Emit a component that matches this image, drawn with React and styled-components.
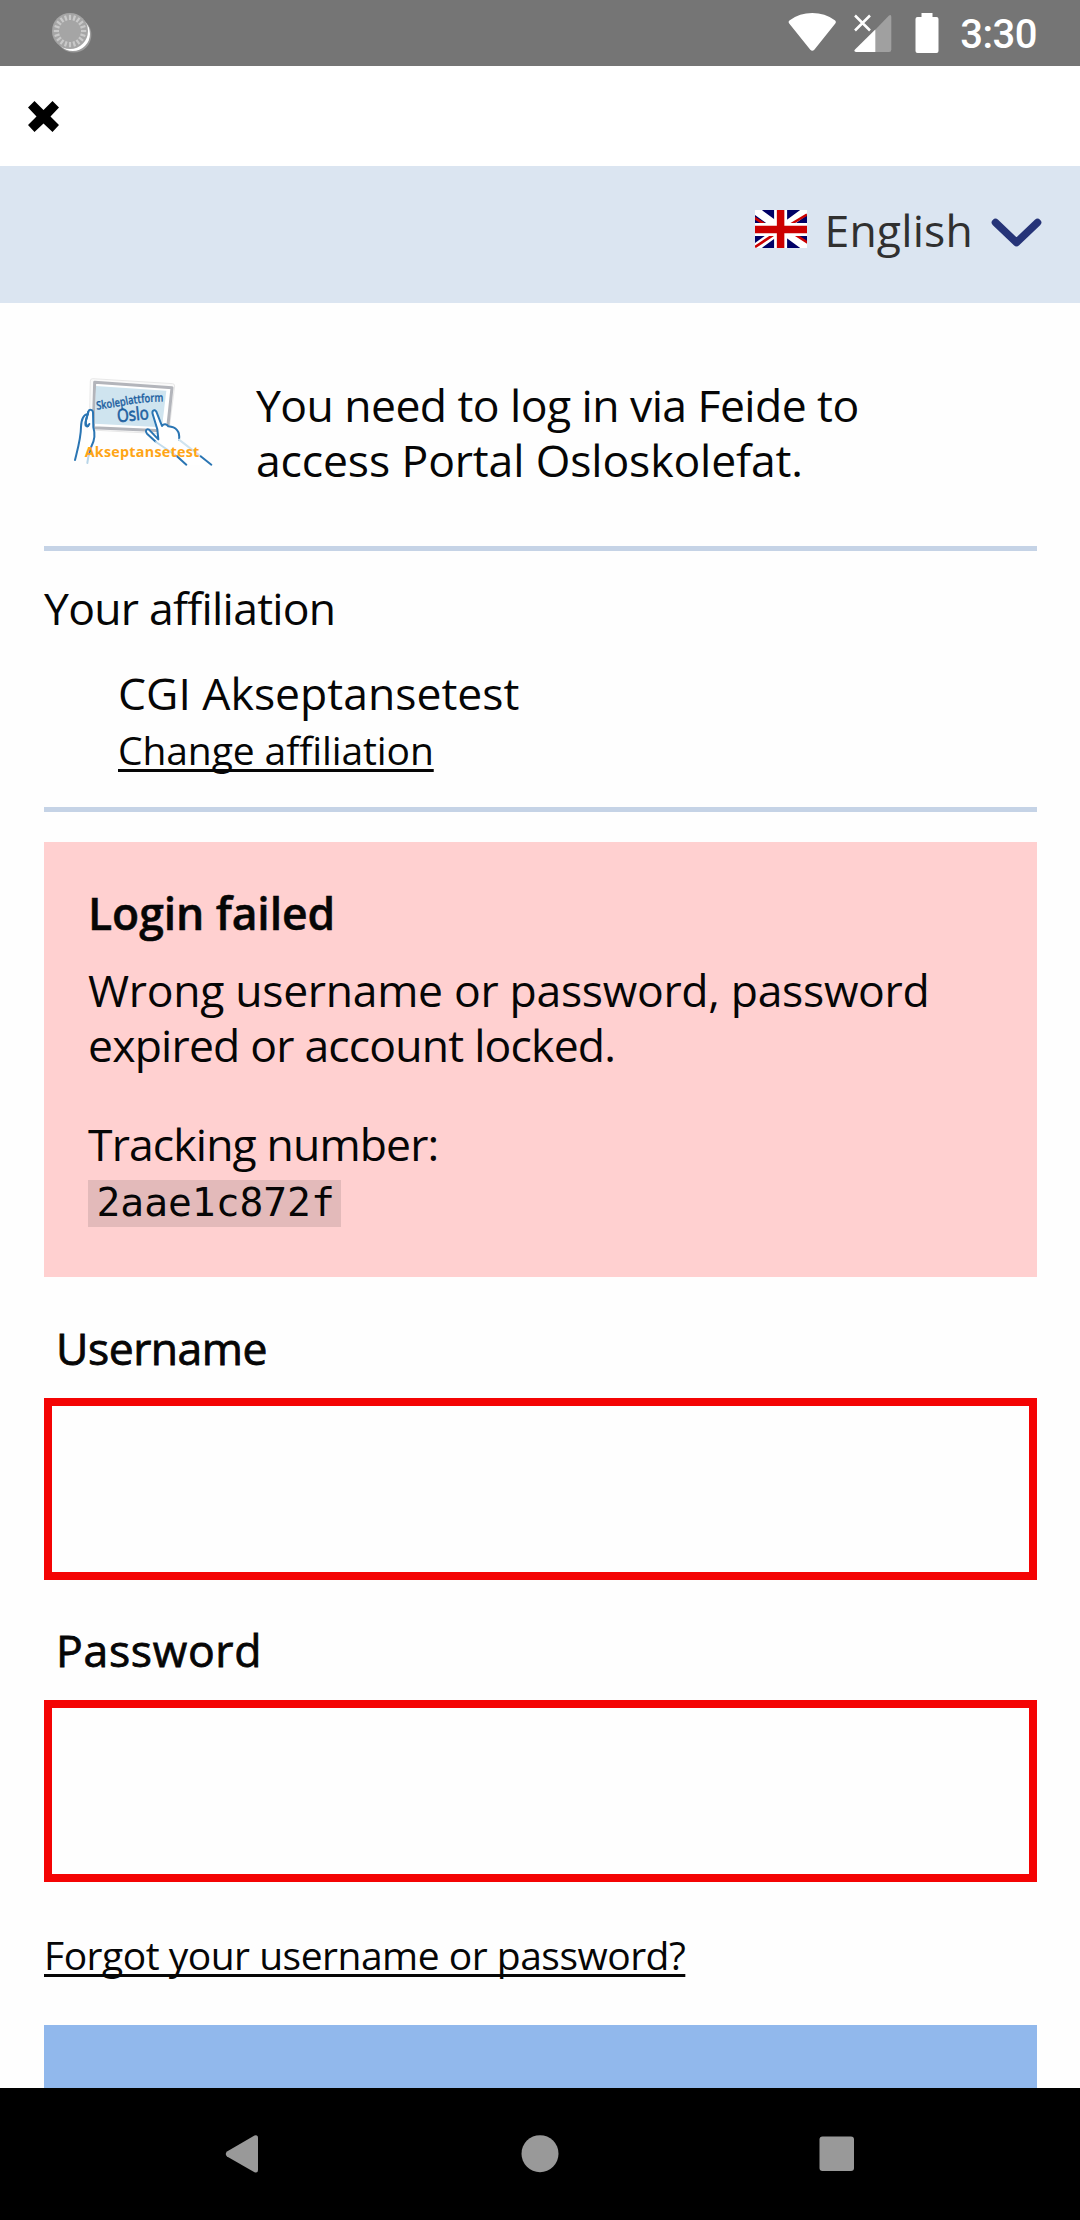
import React from "react";
import styled, { createGlobalStyle } from "styled-components";

const GlobalStyle = createGlobalStyle`
  * { box-sizing: border-box; }
  html, body { margin: 0; padding: 0; background: #fefefe; }
`;

const Screen = styled.div`
  display: flex;
  flex-direction: column;
  width: 1080px;
  height: 2220px;
  overflow: hidden;
  background: #fefefe;
  color: #060606;
  font-family: "Open Sans", "Noto Sans", sans-serif;
`;

const StatusBar = styled.header`
  display: flex;
  flex: none;
  justify-content: space-between;
  height: 66px;
  padding-left: 50px;
  padding-right: 43px;
  background: #757575;
`;

const StatusIcons = styled.div`
  display: flex;
`;

const Clock = styled.time`
  margin-left: 21px;
  color: #fff;
  font: 500 40px/66px Roboto, sans-serif;
  padding-top: 2px;
  height: 66px;
  letter-spacing: -0.5px;
`;

const Icon = styled.svg`
  display: block;
  flex: none;
`;

const StatusIcon = styled(Icon)`
  margin-left: ${(p) => p.$gap || 0}px;
`;

const AppBar = styled.div`
  display: flex;
  flex: none;
  height: 100px;
  padding: 34px 27px;
  background: #fff;
`;

const IconButton = styled.button`
  display: block;
  padding: 0;
  border: 0;
  background: none;
  line-height: 0;
`;

const LanguageBar = styled.div`
  display: flex;
  flex: none;
  justify-content: flex-end;
  height: 137px;
  padding: 36px 38px 0 0;
  background: #dbe5f1;
`;

const LanguageButton = styled.button`
  display: flex;
  align-items: flex-start;
  padding: 0;
  border: 0;
  background: none;
  color: #303030;
  font-family: inherit;
`;

const Flag = styled(Icon)`
  margin: 8px 17px 0 0;
`;

const Chevron = styled(Icon)`
  margin: 15px 0 0 17px;
`;

const Page = styled.main`
  display: flex;
  flex-direction: column;
  flex: 1;
  min-height: 0;
  overflow: hidden;
  padding: 0 43px 0 44px;
`;

const Line = styled.span`
  display: block;
  font-size: 44.5px;
  line-height: 55px;
  letter-spacing: ${(p) => p.$spacing || 0}px;
  white-space: nowrap;
`;

const Intro = styled.section`
  display: flex;
  flex: none;
  height: 243px;
  padding-top: 47px;
  margin-left: -4px;
`;

const IntroText = styled.p`
  margin: 0;
  padding: 27px 0 0 16px;
`;

const Divider = styled.hr`
  flex: none;
  width: 100%;
  height: 5px;
  margin: 0;
  border: 0;
  background: #c5d3e6;
`;

const Affiliation = styled.section`
  flex: none;
  height: 256px;
  padding-top: 29px;
`;

const Organisation = styled.div`
  padding: 30px 0 0 74px;
`;

const Link = styled.a`
  display: block;
  width: fit-content;
  margin-top: ${(p) => p.$top || 0}px;
  font-size: 39px;
  line-height: 48px;
  letter-spacing: ${(p) => p.$spacing}px;
  color: #060606;
  text-decoration: underline;
  text-decoration-thickness: 2.6px;
  text-underline-offset: 4px;
  text-decoration-skip-ink: none;
  white-space: nowrap;
`;

const Alert = styled.section`
  flex: none;
  height: 435px;
  margin-top: 30px;
  padding: 43px 44px 0;
  background: #ffd0d0;
`;

const AlertTitle = styled.h2`
  margin: 0 0 22px;
  font-size: 44.5px;
  font-weight: 600;
  line-height: 55px;
  letter-spacing: -0.1px;
  -webkit-text-stroke: 0.5px currentColor;
`;

const AlertText = styled.p`
  margin: 0 0 44px;
`;

const TrackingCode = styled.code`
  display: block;
  width: 253px;
  height: 47px;
  margin-top: 9px;
  padding-left: 8.5px;
  background: #e3baba;
  font: 39.6px/45px "DejaVu Sans Mono", monospace;
`;

const Field = styled.label`
  display: block;
  flex: none;
  margin-top: ${(p) => p.$top}px;
`;

const FieldLabel = styled.span`
  display: block;
  padding-left: 12px;
  margin-bottom: 23px;
  font-size: 44.5px;
  line-height: 55px;
  letter-spacing: ${(p) => p.$spacing}px;
  -webkit-text-stroke: 0.8px currentColor;
`;

const Input = styled.input`
  display: block;
  width: 100%;
  height: 182px;
  border: 8px solid #f40404;
  border-radius: 0;
  background: #fefefe;
  outline: none;
`;

const SubmitButton = styled.button`
  flex: none;
  height: 140px;
  margin-top: 46px;
  border: 0;
  background: #91b8ec;
`;

const NavigationBar = styled.nav`
  display: flex;
  flex: none;
  justify-content: space-between;
  height: 132px;
  padding: 46px 225px 0;
  background: #000;
`;

const ticks = Array.from({ length: 20 }, (_, i) => i * 18);

function Spinner() {
  return (
    <Icon width="44" height="66" viewBox="0 0 44 66">
      <circle cx="23.8" cy="35" r="17.6" fill="#9b9b9b" />
      <circle cx="22.8" cy="33.8" r="17.2" fill="#fff" />
      <circle cx="20" cy="31" r="18" fill="#a5a5a5" />
      {ticks.map((a) => (
        <line key={a} x1="20" y1="14.8" x2="20" y2="20" stroke="#c9c9c9" strokeWidth="2.2" transform={`rotate(${a} 20 31)`} />
      ))}
    </Icon>
  );
}

function Wifi() {
  return (
    <StatusIcon width="48" height="66" viewBox="0 0 48 66">
      <path d="M1.2 23.5Q-.2 21.6 1.8 20.2Q11.5 13 24.3 13Q37 13 46.8 20.2Q48.6 21.6 47.3 23.5L26.3 49.7Q24.3 52 22.3 49.7Z" fill="#fff" />
    </StatusIcon>
  );
}

function Signal() {
  return (
    <StatusIcon $gap={18} width="38" height="66" viewBox="0 0 38 66">
      <path d="M35 15.5Q37.3 14.2 37.3 17V49.5Q37.3 52 35 52H21V30Z" fill="#a0a0a0" />
      <path d="M21.3 29.5V52H2Q-.7 51.5 1 49.5Z" fill="#fff" />
      <path d="M1 15.5L16 30.5M16 15.5L1 30.5" stroke="#fff" strokeWidth="2.5" />
    </StatusIcon>
  );
}

function Battery() {
  return (
    <StatusIcon $gap={23} width="24" height="66" viewBox="0 0 24 66">
      <path d="M6.5 13H17.5V17H21.5Q23.5 17 23.5 19V51Q23.5 53 21.5 53H2.5Q.5 53 .5 51V19Q.5 17 2.5 17H6.5Z" fill="#fff" />
    </StatusIcon>
  );
}

function UnionJack() {
  return (
    <Flag width="52" height="38" viewBox="0 0 52 38">
      <rect width="52" height="38" fill="#006" />
      <path d="M0 0L52 38M52 0L0 38" stroke="#fff" strokeWidth="8" />
      <path d="M-2 7L14 17M0 37L18 25.2M52 4.5L32 16.5M54 33.5L36 22" stroke="#c00" strokeWidth="2.6" />
      <path d="M25.6 0V38M0 19.5H52" stroke="#fff" strokeWidth="13" />
      <path d="M25.6 0V38M0 19.5H52" stroke="#c00" strokeWidth="7.5" />
    </Flag>
  );
}

function Logo() {
  return (
    <Icon width="200" height="140" viewBox="0 0 600 420">
      <path d="M158 86L398 101Q404 102 404 108L386 248Q385 253 378 252L154 240Q148 239 148 233L151 93Q151 86 158 86Z" fill="#fafafa" stroke="#e8e8e8" strokeWidth="3" />
      <path d="M164 97L396 113L382 243L160 233Z" fill="#fff" stroke="#b3b5bb" strokeWidth="9" strokeLinejoin="round" />
      <path d="M168 108L379 122L366 232L164 221Z" fill="#cfe4ef" />
      <path id="arc" d="M170 179Q212 174 256 166Q310 154 380 155" fill="none" />
      <g fill="#1c60a0" stroke="#1c60a0" fontFamily="'Open Sans', sans-serif">
        <text fontWeight="600" fontSize="35" strokeWidth="0.8">
          <textPath href="#arc" textLength="202" lengthAdjust="spacingAndGlyphs">Skoleplattform</textPath>
        </text>
        <text x="233" y="217" fontSize="54" textLength="95" lengthAdjust="spacingAndGlyphs" transform="rotate(-6 233 217)" strokeWidth="2">Oslo</text>
      </g>
      <g fill="none" stroke="#2a75b3" strokeWidth="6" strokeLinecap="round" strokeLinejoin="round">
        <path d="M144 228C137 227 136 218 139 207L145 185C148 177 158 178 159 187L160 232C166 252 164 270 155 287L146 314" fill="#fff" />
        <path d="M143 193C129 194 124 209 123 231C123 262 116 286 105 330" />
        <path d="M145 185C142 202 133 217 137 227Q143 233 148 222" />
        <path d="M365 228L349 185C343 176 335 182 338 192L352 238L355 268L327 239C318 235 315 244 321 251L348 276L390 304L438 344L514 344C480 312 440 285 418 269C422 242 407 231 385 228C377 220 369 222 365 228Z" fill="#fff" stroke="none" />
        <path d="M348 276L321 251C315 244 318 235 327 239L355 268L352 238L338 192C335 182 343 176 349 185L366 228C372 219 380 222 385 229C408 231 421 244 417 269" />
        <path d="M417 269L482 319" stroke="#d0e4ef" />
        <path d="M348 276L410 318" stroke="#c3dcec" />
        <path d="M482 319L514 344M410 318L439 344" />
        <path d="M146 314L142 339" stroke="#b9d6e9" />
      </g>
      <text x="134" y="320" textLength="344" lengthAdjust="spacing" fill="#ffa516" fontFamily="'Open Sans', 'DejaVu Sans', sans-serif" fontWeight="700" fontSize="43">Akseptansetest</text>
    </Icon>
  );
}

export default function App() {
  return (
    <Screen>
      <GlobalStyle />
      <StatusBar>
        <Spinner />
        <StatusIcons>
          <Wifi />
          <Signal />
          <Battery />
          <Clock>3:30</Clock>
        </StatusIcons>
      </StatusBar>
      <AppBar>
        <IconButton aria-label="Close">
          <Icon width="34" height="34" viewBox="0 0 34 34">
            <path d="M7.5 1L16.5 10L25.5 1L32 7.5L23.5 16.5L32 25L25.5 32L16.5 23.5L7.5 32L1 25L9.5 16.5L1 7.5Z" fill="#000" />
          </Icon>
        </IconButton>
      </AppBar>
      <LanguageBar>
        <LanguageButton>
          <UnionJack />
          <Line $spacing={0.2}>English</Line>
          <Chevron width="52" height="32" viewBox="0 0 52 32">
            <path d="M5.5 5.5L26.5 25.5L47.5 5.5" fill="none" stroke="#263478" strokeWidth="7.6" strokeLinecap="round" strokeLinejoin="round" />
          </Chevron>
        </LanguageButton>
      </LanguageBar>
      <Page>
        <Intro>
          <Logo />
          <IntroText>
            <Line $spacing={-0.557}>You need to log in via Feide to</Line>
            <Line $spacing={-0.12}>access Portal Osloskolefat.</Line>
          </IntroText>
        </Intro>
        <Divider />
        <Affiliation>
          <Line $spacing={-0.72}>Your affiliation</Line>
          <Organisation>
            <Line $spacing={0}>CGI Akseptansetest</Line>
            <Link $top={6} $spacing={-0.1}>Change affiliation</Link>
          </Organisation>
        </Affiliation>
        <Divider />
        <Alert>
          <AlertTitle>Login failed</AlertTitle>
          <AlertText>
            <Line $spacing={-0.3}>Wrong username or password, password</Line>
            <Line $spacing={-0.8}>expired or account locked.</Line>
          </AlertText>
          <Line $spacing={-0.87}>Tracking number:</Line>
          <TrackingCode>2aae1c872f</TrackingCode>
        </Alert>
        <Field $top={43}>
          <FieldLabel $spacing={-0.5}>Username</FieldLabel>
          <Input type="text" />
        </Field>
        <Field $top={42}>
          <FieldLabel $spacing={0.7}>Password</FieldLabel>
          <Input type="password" />
        </Field>
        <Link $top={49} $spacing={-0.5}>Forgot your username or password?</Link>
        <SubmitButton aria-label="Log in" />
      </Page>
      <NavigationBar>
        <Icon width="34" height="40" viewBox="0 0 34 40">
          <path d="M2 17.5L29.5 1.5Q33 .5 33 4V36Q33 39.5 29.5 38.3L2 22.5Q-.5 20 2 17.5Z" fill="#999" />
        </Icon>
        <Icon width="40" height="40" viewBox="0 0 40 40">
          <circle cx="21" cy="19.7" r="18.5" fill="#999" />
        </Icon>
        <Icon width="36" height="40" viewBox="0 0 36 40">
          <rect x="0.5" y="2.5" width="34.5" height="34.5" rx="3" fill="#999" />
        </Icon>
      </NavigationBar>
    </Screen>
  );
}
